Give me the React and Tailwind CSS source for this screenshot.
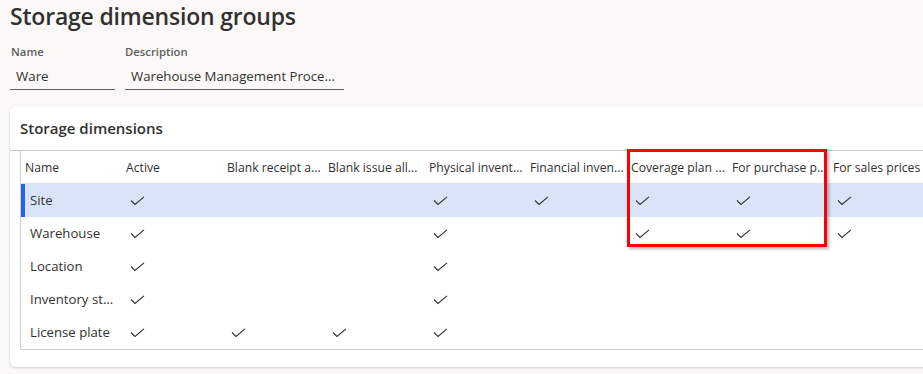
import React from "react";

const cols = [
  "Active",
  "Blank receipt a...",
  "Blank issue all...",
  "Physical invent...",
  "Financial inven...",
  "Coverage plan ...",
  "For purchase p...",
  "For sales prices",
];

const rows = [
  { name: "Site", checks: [1, 0, 0, 1, 1, 1, 1, 1], selected: true },
  { name: "Warehouse", checks: [1, 0, 0, 1, 0, 1, 1, 1] },
  { name: "Location", checks: [1, 0, 0, 1, 0, 0, 0, 0] },
  { name: "Inventory st...", checks: [1, 0, 0, 1, 0, 0, 0, 0] },
  { name: "License plate", checks: [1, 1, 1, 1, 0, 0, 0, 0] },
];

function Check() {
  return (
    <svg width="15" height="10" viewBox="0 0 15 10" className="block">
      <path d="M1 4.5 L5 8.5 L14 0.8" fill="none" stroke="#323130" strokeWidth="1.1" />
    </svg>
  );
}

export default function App() {
  return (
    <div
      className="w-[923px] h-[374px] overflow-hidden bg-[#faf9f8] text-[#323130]"
      style={{ fontFamily: '"Open Sans", "Noto Sans", sans-serif' }}
    >
      <div className="pl-[10px]">
        <h1 className="text-[23px] leading-[32px] font-semibold tracking-[-0.2px]">Storage dimension groups</h1>
        <div className="flex gap-[10px] mt-[12px]">
          <div className="w-[105px]">
            <div className="text-[11.3px] leading-[16px] font-semibold text-[#605e5c] pl-[1px]">Name</div>
            <div className="mt-[6px] h-[24px] border-b border-[#605e5c] pl-[6px] text-[13.3px] leading-[20px]">Ware</div>
          </div>
          <div className="w-[219px]">
            <div className="text-[11.3px] leading-[16px] font-semibold text-[#605e5c]">Description</div>
            <div className="mt-[6px] h-[24px] border-b border-[#605e5c] pl-[6px] text-[13.2px] leading-[20px] whitespace-nowrap">
              Warehouse Management Proce...
            </div>
          </div>
        </div>
      </div>

      <div className="ml-[10px] mt-[16px] w-[940px] h-[261px] bg-white rounded-[6px] shadow-[0_1px_3px_rgba(0,0,0,0.18)]">
        <div className="h-[44px] pl-[10px] pt-[12px] text-[15px] leading-[20px] font-semibold">Storage dimensions</div>
        <div className="border-t border-[#c8c6c4]">
          <div className="relative ml-[10px] border-l border-b border-[#d2d0ce]">
            <div className="flex h-[33px] items-center pt-[3px] border-b border-[#e1dfdd] text-[12.2px]">
              <div className="w-[101px] pl-[4px] shrink-0">Name</div>
              {cols.map((c) => (
                <div key={c} className="w-[101px] pl-[4px] shrink-0 whitespace-nowrap">{c}</div>
              ))}
            </div>
            {rows.map((r) => (
              <div
                key={r.name}
                className={
                  "flex h-[33px] items-center text-[13.2px] " + (r.selected ? "bg-[#d8e4f8] relative" : "")
                }
              >
                {r.selected && <div className="absolute left-0 top-0 bottom-0 w-[4px] bg-[#2266e3]" />}
                <div className="w-[101px] pl-[9px] shrink-0 whitespace-nowrap">{r.name}</div>
                {r.checks.map((v, i) => (
                  <div key={i} className="w-[101px] pl-[8px] shrink-0">
                    {v ? <Check /> : null}
                  </div>
                ))}
              </div>
            ))}
            <div className="absolute left-[606px] top-[-2px] w-[200px] h-[98px] border-[3px] border-[#ff0000] shadow-[2px_2px_3px_rgba(0,0,0,0.3)]" />
          </div>
        </div>
      </div>
    </div>
  );
}
